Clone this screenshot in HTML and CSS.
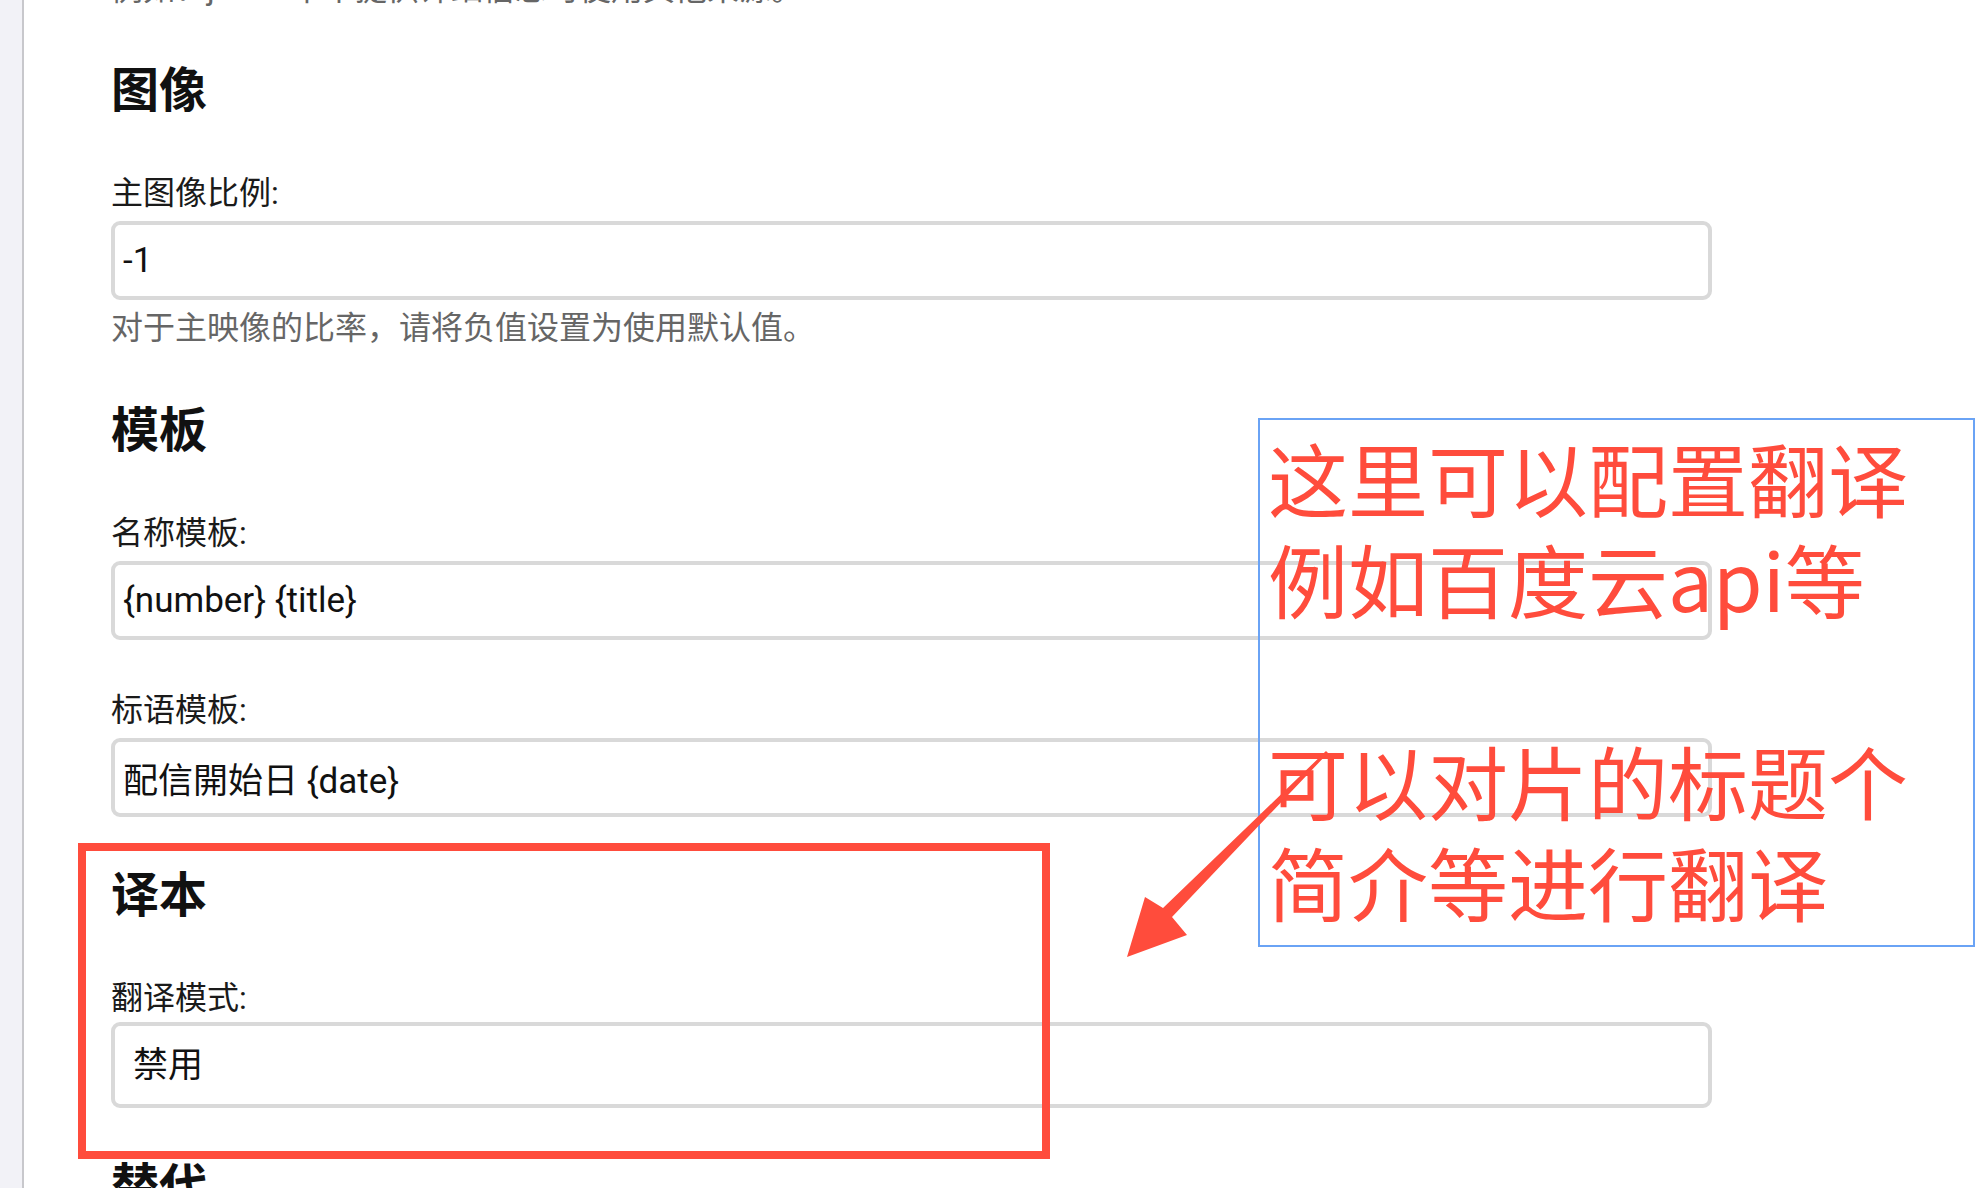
FILE: index.html
```html
<!DOCTYPE html>
<html lang="zh-CN">
<head>
  <meta charset="UTF-8" />
  <meta name="viewport" content="width=device-width, initial-scale=1.0"/>
  <title>设置</title>
  <link rel="stylesheet" href="styles.css">
</head>
<body>
  <aside class="sidebar"></aside>

  <main class="content">
    <div class="field field-cut">
      <p class="help">例如：javdb 中不提供详细信息时使用其他来源。</p>
    </div>

    <h2>图像</h2>
    <div class="field field-help">
      <label for="ratio">主图像比例:</label>
      <input type="text" id="ratio" value="-1">
      <p class="help">对于主映像的比率，请将负值设置为使用默认值。</p>
    </div>

    <h2>模板</h2>
    <div class="field">
      <label for="nameTpl">名称模板:</label>
      <input type="text" id="nameTpl" value="{number} {title}">
    </div>
    <div class="field">
      <label for="tagTpl">标语模板:</label>
      <input type="text" id="tagTpl" value="配信開始日 {date}">
    </div>

    <section class="translate">
      <div class="mark-red"></div>
      <h2>译本</h2>
      <div class="field">
        <label for="mode">翻译模式:</label>
        <select id="mode" class="select">
          <option>禁用</option>
        </select>
      </div>
    </section>

    <h2>替代</h2>
  </main>

  <!-- annotation layer -->
  <div class="note">
    <p>这里可以配置翻译<br>例如百度云api等</p>
    <p>可以对片的标题个<br>简介等进行翻译</p>
  </div>
  <svg class="arrow" width="1978" height="1188" viewBox="0 0 1978 1188">
    <path d="M1326 751 L1163 908 L1145 897 L1127 957 L1187 935 L1172 917 L1328 753 Z" fill="#ff4c3c"/>
  </svg>
</body>
</html>
```

FILE: styles.css
```css
body {
  font-family: Roboto, "Noto Sans CJK SC", sans-serif;
  color: #111;
  background: #fff;
  margin: 0;
  display: flex;
  height: 1188px;
  overflow: hidden;
}

.sidebar {
  width: 22px;
  flex-shrink: 0;
  background: #f2f2f7;
  border-right: 2px solid #c8c8cc;
}

.content {
  flex: 1;
  padding-left: 87px;
  max-width: 1601px;
  position: relative;
}

h2 {
  font-family: Roboto, "Noto Sans CJK SC", sans-serif;
  font-size: 48px;
  line-height: 58px;
  font-weight: 700;
  margin: 0 0 53px;
}

.field {
  margin-bottom: 50px;
}

.field-help {
  margin-bottom: 54px;
}

.field-cut {
  margin-top: -31px;
  margin-bottom: 53px;
}

.field-cut .help {
  margin: 0;
}

label {
  display: block;
  font-size: 32px;
  line-height: 40px;
  margin-bottom: 8px;
  color: #1a1a1a;
}

input[type="text"],
.select {
  display: block;
  width: 100%;
  box-sizing: border-box;
  height: 79px;
  padding: 0 8px;
  border: 4px solid #d9d9d9;
  border-radius: 9px;
  background: #fff;
  font-family: Roboto, "Noto Sans CJK SC", sans-serif;
  font-size: 35px;
  color: #111;
  outline: none;
}

.select {
  -webkit-appearance: none;
  appearance: none;
  height: 86px;
  margin-top: -4px;
  padding-left: 18px;
}

.help {
  margin: 8px 0 0;
  font-size: 32px;
  line-height: 40px;
  color: #666;
}

.translate {
  position: relative;
}

.mark-red {
  position: absolute;
  top: -24px;
  left: -33px;
  width: 972px;
  height: 316px;
  box-sizing: border-box;
  border: 8px solid #ff4c3c;
}

.note {
  position: absolute;
  left: 1258px;
  top: 418px;
  width: 717px;
  height: 529px;
  box-sizing: border-box;
  border: 2px solid #6aa3f5;
  padding: 6px 0 0 8px;
  font-family: "Noto Sans CJK SC", sans-serif;
  font-size: 80px;
  line-height: 101px;
  color: #ff4c3c;
}

.note p {
  margin: 0 0 101px;
}

.arrow {
  position: absolute;
  left: 0;
  top: 0;
  pointer-events: none;
}
```
